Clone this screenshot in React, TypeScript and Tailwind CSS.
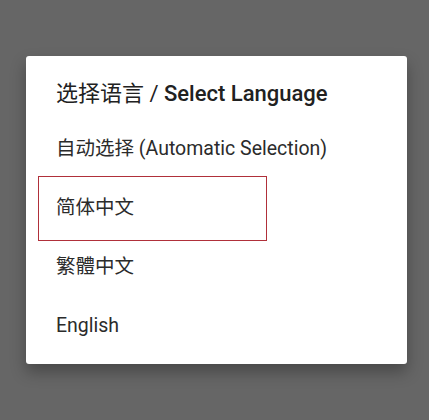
import React from 'react';

const languages = ['自动选择 (Automatic Selection)', '简体中文', '繁體中文', 'English'];

const App = () => {
  return (
    <div
      className="w-[429px] h-[420px] bg-[#666666] pt-[56px] pl-[26px]"
      style={{ fontFamily: 'Roboto, "Noto Sans CJK SC", sans-serif' }}
    >
      <div className="relative w-[381px] h-[308px] bg-white rounded-[3px] shadow-[0_8px_16px_rgba(0,0,0,0.3)]">
        <div className="pt-[23px] pl-[30px] h-[63px] text-[22px] leading-[30px] text-[#212121]">
          选择语言 / <span className="font-medium">Select Language</span>
        </div>
        <div className="flex flex-col">
          {languages.map((lang) => (
            <div key={lang} className="h-[59px] flex items-center pl-[30px] text-[19.5px] text-[#2b2b2b]">
              {lang}
            </div>
          ))}
        </div>

        {/* selection marker */}
        <div className="absolute left-[12px] top-[120px] w-[229px] h-[65px] border border-[#b0303a]" />
      </div>
    </div>
  );
};

export default App;
